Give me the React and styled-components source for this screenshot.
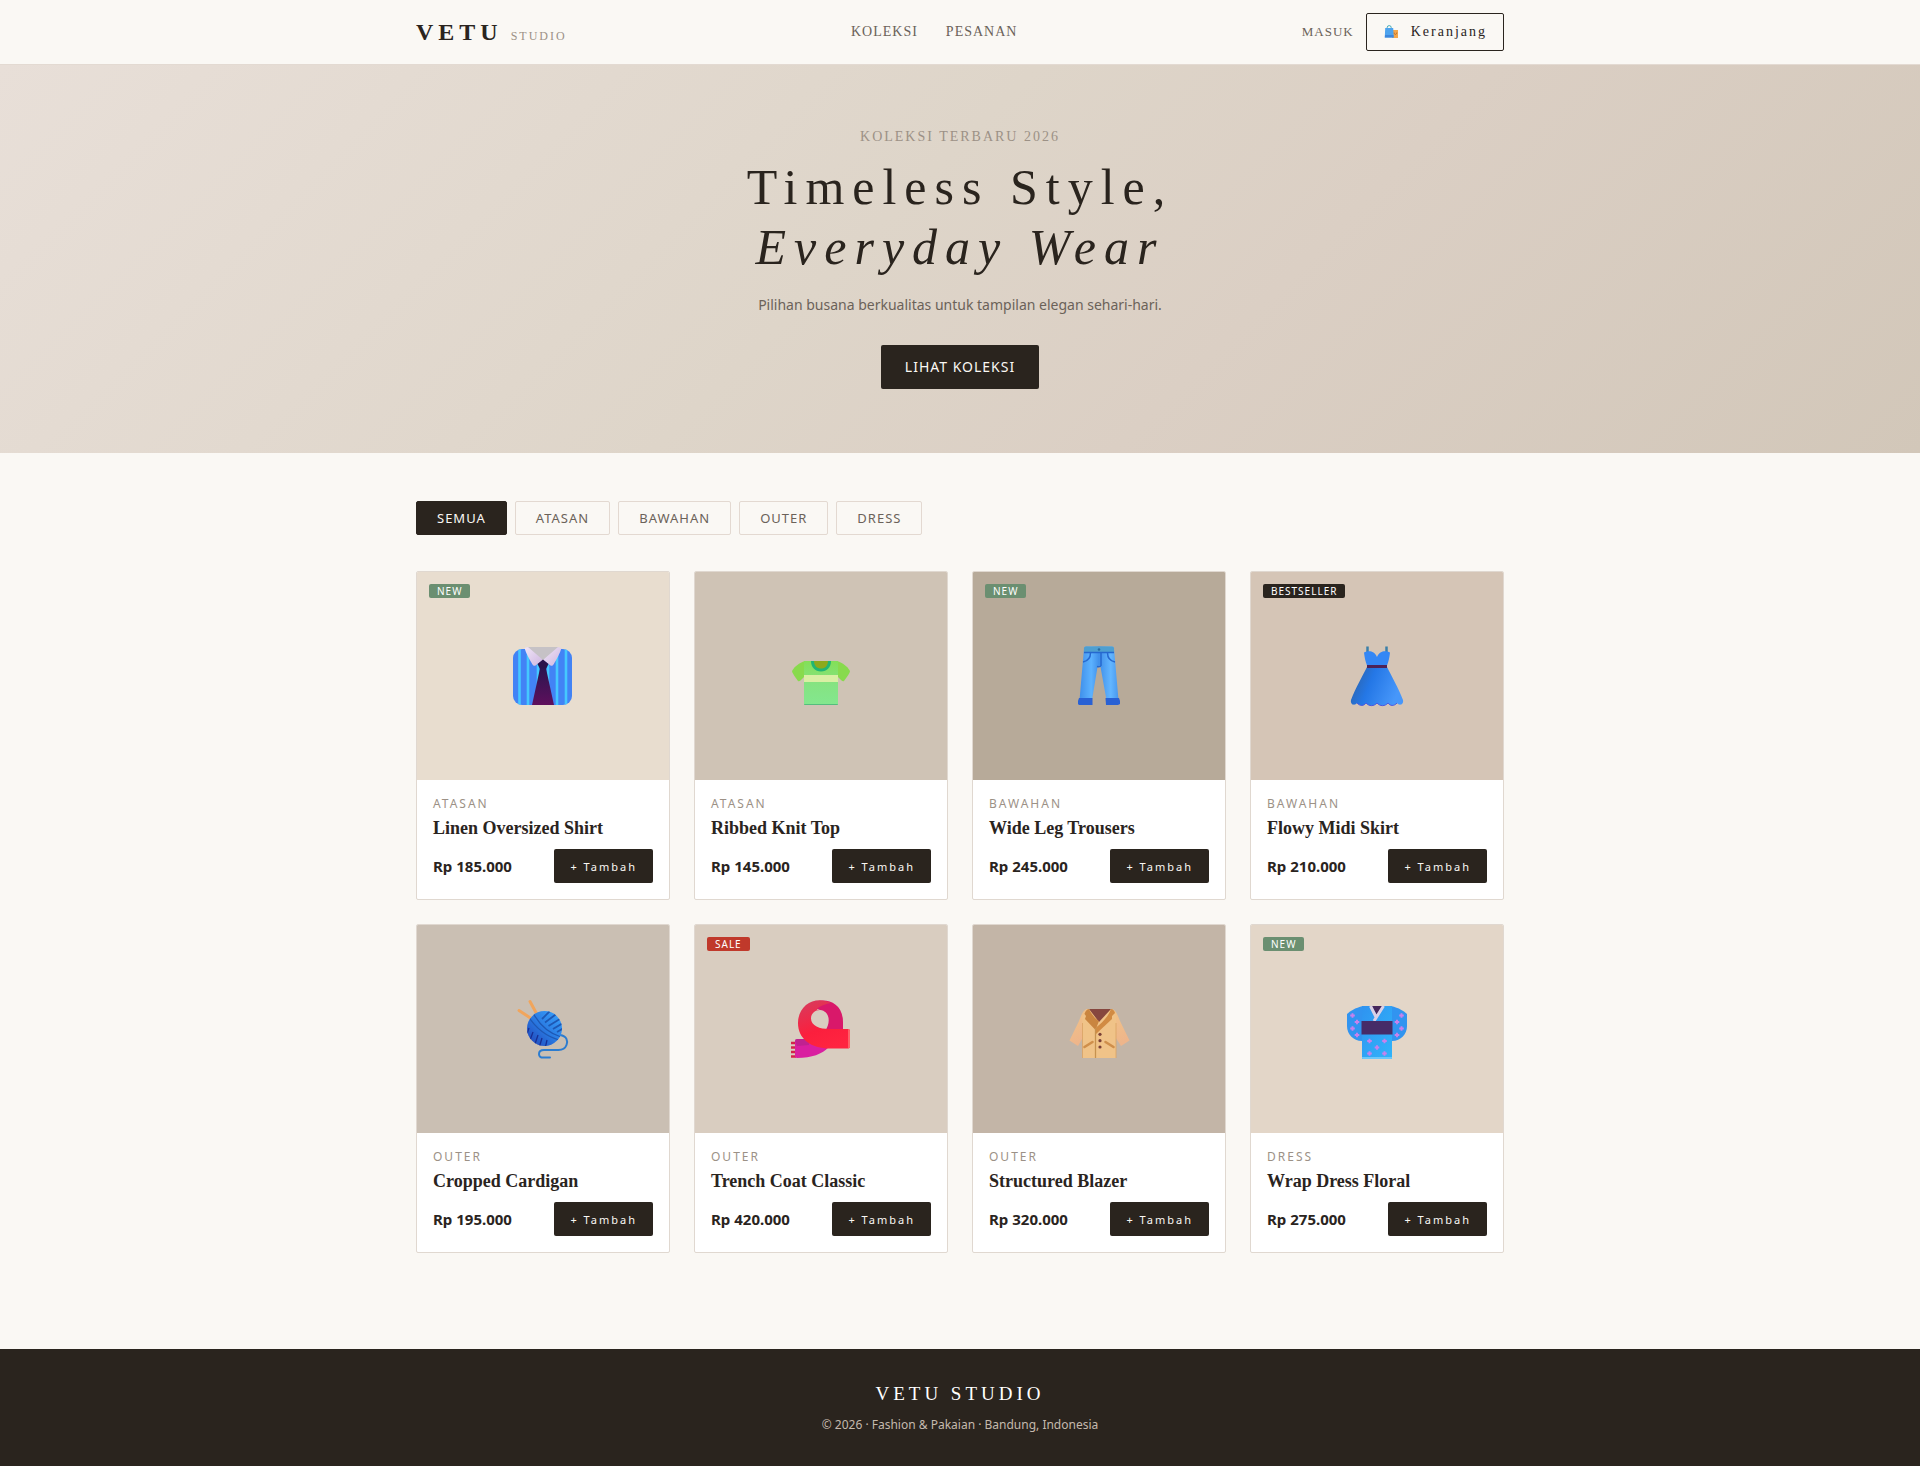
import { useState } from "react";
import styled, { createGlobalStyle } from "styled-components";

const serif = `"Liberation Serif", serif`;
const sans = `"Noto Sans", sans-serif`;

const GlobalStyle = createGlobalStyle`
  * {
    box-sizing: border-box;
    margin: 0;
    padding: 0;
  }
  body {
    background: #faf8f4;
    color: #2a241e;
    font-family: ${sans};
  }
  button {
    font: inherit;
    cursor: pointer;
  }
  a {
    color: inherit;
    text-decoration: none;
  }
`;

//Layout
const Page = styled.div`
  display: flex;
  flex-direction: column;
  min-height: 100vh;
`;

const Container = styled.div`
  width: 100%;
  max-width: 1136px;
  margin: 0 auto;
  padding: 0 24px;
`;

//Header
const Header = styled.header`
  border-bottom: 1px solid #e3dad2;
  font-family: ${serif};
`;

const HeaderRow = styled(Container)`
  display: flex;
  justify-content: space-between;
  align-items: center;
  height: 64px;
`;

const Logo = styled.a`
  display: flex;
  align-items: baseline;
  gap: 8px;
  font-size: 24px;
  font-weight: 700;
  letter-spacing: 5px;

  small {
    font-size: 12px;
    font-weight: 400;
    letter-spacing: 2px;
    color: #9c9186;
  }
`;

const Nav = styled.nav`
  display: flex;
  gap: 28px;
`;

const NavLink = styled.a`
  font-size: 14px;
  letter-spacing: 1px;
  text-transform: uppercase;
  color: #6b6259;
`;

const Account = styled.div`
  display: flex;
  align-items: center;
  gap: 12px;
`;

const LoginLink = styled(NavLink)`
  font-size: 13px;
`;

const CartButton = styled.button`
  display: flex;
  align-items: center;
  gap: 10px;
  height: 38px;
  padding: 0 16px;
  border: 1px solid #2a241e;
  border-radius: 2px;
  background: transparent;
  color: #2a241e;
  font-size: 14px;
  letter-spacing: 2px;
`;

//Hero
const Hero = styled.section`
  display: flex;
  flex-direction: column;
  align-items: center;
  padding: 64px 24px;
  text-align: center;
  background: linear-gradient(
    135deg,
    #e8dfd8 0%,
    #ded5c9 45%,
    #dbcfc4 65%,
    #d2c7b9 100%
  );
`;

const Eyebrow = styled.p`
  margin-bottom: 12px;
  font-family: ${serif};
  font-size: 14px;
  line-height: 16px;
  letter-spacing: 2px;
  text-transform: uppercase;
  color: #9c9186;
`;

const HeroTitle = styled.h1`
  margin-bottom: 16px;
  font-family: ${serif};
  font-size: 50px;
  font-weight: 400;
  line-height: 60px;
  letter-spacing: 8px;
`;

const HeroText = styled.p`
  margin-bottom: 28px;
  font-size: 14px;
  line-height: 24px;
  color: #6b6259;
`;

const HeroButton = styled.a`
  padding: 0 24px;
  border-radius: 2px;
  background: #2a241e;
  color: #faf8f4;
  font-size: 14px;
  line-height: 44px;
  letter-spacing: 1px;
  text-transform: uppercase;
`;

//Catalog
const Main = styled(Container).attrs({ as: "main" })`
  flex: 1;
  padding-top: 48px;
  padding-bottom: 96px;
`;

const Filters = styled.div`
  display: flex;
  flex-wrap: wrap;
  gap: 8px;
  margin-bottom: 36px;
`;

const FilterButton = styled.button`
  height: 34px;
  padding: 0 20px;
  border: 1px solid ${({ $active }) => ($active ? "#2a241e" : "#e3d9d1")};
  border-radius: 2px;
  background: ${({ $active }) => ($active ? "#2a241e" : "transparent")};
  color: ${({ $active }) => ($active ? "#faf8f4" : "#6b6259")};
  font-size: 13px;
  letter-spacing: 1px;
  text-transform: uppercase;
`;

const Grid = styled.div`
  display: grid;
  grid-template-columns: repeat(4, 1fr);
  gap: 24px;

  @media (max-width: 1000px) {
    grid-template-columns: repeat(2, 1fr);
  }
`;

const Card = styled.article`
  overflow: hidden;
  border: 1px solid #e0d8d0;
  border-radius: 2px;
  background: #fff;
`;

const Thumb = styled.div`
  position: relative;
  display: flex;
  justify-content: center;
  align-items: center;
  height: 208px;
  background: ${({ $color }) => $color};
`;

const badgeColors = { New: "#6b8f71", Sale: "#c0392b", Bestseller: "#2a241e" };

const Badge = styled.span`
  position: absolute;
  top: 12px;
  left: 12px;
  padding: 0 8px;
  border-radius: 2px;
  background: ${({ $type }) => badgeColors[$type]};
  color: #fff;
  font-size: 10px;
  line-height: 14px;
  letter-spacing: 1px;
  text-transform: uppercase;
`;

const CardBody = styled.div`
  padding: 16px;
`;

const Category = styled.p`
  margin-bottom: 4px;
  font-size: 12px;
  line-height: 16px;
  letter-spacing: 2px;
  text-transform: uppercase;
  color: #9c9186;
`;

const ProductName = styled.h3`
  margin-bottom: 9px;
  font-family: ${serif};
  font-size: 18px;
  line-height: 24px;
`;

const CardRow = styled.div`
  display: flex;
  justify-content: space-between;
  align-items: center;
`;

const Price = styled.span`
  font-size: 15px;
  font-weight: 700;
`;

const AddButton = styled.button`
  height: 34px;
  padding: 0 16px;
  border: 0;
  border-radius: 2px;
  background: #2a241e;
  color: #faf8f4;
  font-size: 11px;
  letter-spacing: 2px;
`;

//Footer
const Footer = styled.footer`
  padding: 32px 24px;
  text-align: center;
  background: #2a241e;
`;

const FooterTitle = styled.p`
  margin-bottom: 8px;
  font-family: ${serif};
  font-size: 19px;
  line-height: 26px;
  letter-spacing: 4px;
  color: #fff;
`;

const FooterText = styled.p`
  font-size: 12px;
  line-height: 19px;
  color: #c4b9ad;
`;

//Icons
const Icon = ({ children }) => (
  <svg width="64" height="64" viewBox="0 0 64 64" aria-hidden="true">
    {children}
  </svg>
);

const BagsIcon = () => (
  <svg width="18" height="14" viewBox="-1 0 18 14" aria-hidden="true">
    <path d="M8 5h6v8H8z" fill="#f3a64a" />
    <path d="M10 7.500c0 2.500 2.800 2.500 2.800 0" fill="none" stroke="#a8602a" strokeWidth="0.800" />
    <path d="M3.200 4V2.600a2 2 0 0 1 4 0V4" fill="none" stroke="#3fa9b8" strokeWidth="1" />
    <path d="M1.200 3h8l.5 9.500H.8z" fill="#4da3ee" />
    <path d="M1 10h8.600l.1 2.500H.8z" fill="#3d86dc" />
  </svg>
);

const ShirtIcon = () => (
  <Icon>
    <defs>
      <linearGradient id="tie" x1="0" y1="0" x2="0" y2="1">
        <stop offset="0" stopColor="#2c1650" />
        <stop offset="1" stopColor="#5e0f5c" />
      </linearGradient>
      <linearGradient id="collar" x1="0" y1="0" x2="1" y2="1">
        <stop offset="0" stopColor="#f1e6f7" />
        <stop offset="1" stopColor="#cdb5e0" />
      </linearGradient>
      <clipPath id="shirtBody">
        <rect x="2" y="5" width="59" height="56" rx="9" />
      </clipPath>
    </defs>
    <g clipPath="url(#shirtBody)">
      <rect x="2" y="5" width="59" height="56" fill="#4283f5" />
      <path
        d="M8.500 5v56M17 5v56M27 20v41M37 20v41M46 5v56M55 5v56"
        stroke="#45c8ff"
        strokeWidth="2.600"
      />
    </g>
    <path d="M16 3h32L32 18z" fill="#c6c2c6" />
    <path d="M13.500 4 17 3l15 13-7.500 5.500q-2 1-3-1C18 15 15 9 13.500 4z" fill="url(#collar)" />
    <path d="M50.500 4 47 3 32 16l7.500 5.500q2 1 3-1C46 15 49 9 50.500 4z" fill="url(#collar)" />
    <path d="M32 15.500 37.500 20 35 25h-6l-2.500-5z" fill="#2a134a" />
    <path d="M29 24.500h6L43 61H21z" fill="url(#tie)" />
  </Icon>
);

const TeeIcon = () => (
  <Icon>
    <defs>
      <linearGradient id="tee" x1="0" y1="0" x2="0" y2="1">
        <stop offset="0" stopColor="#83df57" />
        <stop offset="0.500" stopColor="#85e381" />
        <stop offset="1" stopColor="#83e78f" />
      </linearGradient>
    </defs>
    <path d="M16 17C10 19 6 22 3 27q0 2 6 10 1 1 3-1l5-5z" fill="#88da4d" />
    <path d="M48 17c6 2 10 5 13 10q0 2-6 10-1 1-3-1l-5-5z" fill="#88da4d" />
    <path d="M15 17h34v43q0 1-1 1H16q-1 0-1-1z" fill="url(#tee)" />
    <path d="M15 31h34v7H15z" fill="#d9efa4" />
    <path d="M15 60h34q0 1-1 1H16q-1 0-1-1z" fill="#55bd7d" />
    <path d="M22 17h20c0 6-4 10.500-10 10.500S22 23 22 17z" fill="#20b573" />
    <path d="M25 17h14c0 5-3 7.500-7 7.500S25 22 25 17z" fill="#8ca91c" />
  </Icon>
);

const TrousersIcon = () => (
  <Icon>
    <defs>
      <linearGradient id="jeans" x1="0" y1="0" x2="1" y2="0">
        <stop offset="0" stopColor="#3f8fea" />
        <stop offset="0.300" stopColor="#5cb2ff" />
        <stop offset="0.500" stopColor="#3f8fea" />
        <stop offset="0.800" stopColor="#63b6ff" />
        <stop offset="1" stopColor="#4797ee" />
      </linearGradient>
    </defs>
    <path
      d="M19 2.500h26q2 0 2 2L51.500 56H39.500L33.500 23h-3L25 56H12.500L17 4.500q0-2 2-2z"
      fill="url(#jeans)"
    />
    <path d="M19 2.500h26q2 0 2 2V8H17V4.500q0-2 2-2z" fill="#4e9fd0" />
    <path
      d="M17 8.500h30M34 8.500v13q-1 2-4 1M23.500 9c0 5-3 8-7.500 9M40.500 9c0 5 3 8 7.500 9"
      fill="none"
      stroke="#2668cf"
      strokeWidth="1.500"
    />
    <circle cx="32" cy="5.500" r="1.300" fill="#2a6a9d" />
    <path d="M12 54h13.500v7H12q-1.500-1-1-4z" fill="#2961d4" />
    <path d="M38.500 54H52q1.500 3 1 6l-2 1H39z" fill="#2961d4" />
  </Icon>
);

const DressIcon = () => (
  <Icon>
    <defs>
      <linearGradient id="skirt" x1="0" y1="0" x2="1" y2="0.300">
        <stop offset="0" stopColor="#2f5f9c" />
        <stop offset="0.450" stopColor="#2477e6" />
        <stop offset="1" stopColor="#4797fa" />
      </linearGradient>
    </defs>
    <path d="M22.500 2.500V10M41.500 2.500V10" stroke="#3b7fa8" strokeWidth="2.500" />
    <path
      d="M19 8.500c4-2 10-2.500 13 4.500 3-7 9-6.500 13-4.500-.5 5-1.500 9-3 13H22c-1.500-4-2.500-8-3-13z"
      fill="#3487f5"
    />
    <path
      d="M22 23h20c5 10 11 20 16 33 1 5-4 6-6 3-3 3.500-7 3-9 0-3 3.500-8 3.500-11 0-3 3.500-8 3.500-11 0-2 3-6 3.500-9 0-2 3-7 2-6-3 5-13 11-23 16-33z"
      fill="url(#skirt)"
    />
    <path
      d="M12 59c3 3.500 7 3 9 0 3 3.500 8 3.500 11 0 3 3.500 8 3.500 11 0 2 3 6 3.500 9 0"
      fill="none"
      stroke="#4d58de"
      strokeWidth="1"
    />
    <path d="M22 21h20v3H22z" fill="#4d2257" />
  </Icon>
);

const YarnIcon = () => (
  <Icon>
    <defs>
      <linearGradient id="yarn" x1="1" y1="0" x2="0" y2="1">
        <stop offset="0" stopColor="#3ba6ff" />
        <stop offset="0.500" stopColor="#2a7be2" />
        <stop offset="1" stopColor="#2040b6" />
      </linearGradient>
      <clipPath id="ball">
        <circle cx="33.500" cy="31.500" r="17.500" />
      </clipPath>
    </defs>
    <path
      d="M8 13.500 24 24M19 4.500 29 23"
      stroke="#f1a55c"
      strokeWidth="3"
      strokeLinecap="round"
    />
    <path
      d="M49 38c7 1 8 6 6.500 10-1.500 4-4 5-8 5H33q-5 0-5 4t5 3.500h6"
      fill="none"
      stroke="#2c7cd0"
      strokeWidth="2"
      strokeLinecap="round"
    />
    <circle cx="33.500" cy="31.500" r="17.500" fill="url(#yarn)" />
    <g clipPath="url(#ball)" fill="none" stroke="#1e58b4" strokeWidth="1.300">
      <path d="M17 19c7 11 17 20 31 24M22 16c6 11 15 20 28 24" />
      <path d="m31 22 9-9M34 25.500l12-9M37.500 29l13-8M42 32l10-6M46 35l7-4" strokeWidth="1.800" />
      <path d="m18 31-3 9M22 35l-4 11M27 38l-4 12M31 41l-3 10M36 43l-2 9" stroke="#182e92" />
    </g>
  </Icon>
);

const ScarfIcon = () => (
  <Icon>
    <defs>
      <linearGradient id="scarf" x1="0.200" y1="0" x2="0.600" y2="1">
        <stop offset="0" stopColor="#d93a5c" />
        <stop offset="0.600" stopColor="#fb1f3d" />
        <stop offset="1" stopColor="#ff2440" />
      </linearGradient>
    </defs>
    <path d="M2 46h5M2 50.500h5M2 55h5M2 59.500h5" stroke="#d3234a" strokeWidth="2.400" />
    <path d="M6 44q0-2 2-2h18l14 8c-7 7-17 11-32 11q-2 0-2-2z" fill="#d91fa0" />
    <path d="M6 44q0-2 2-2h12v6L8 49z" fill="#a8247f" opacity=".5" />
    <path
      d="M20 9C30-1 54 2 54 25v9H36c6-8 5-20-5-21z"
      fill="#d9186a"
    />
    <path
      d="M42 6C26-2 9 8 9 26c0 16 13 25.500 32 25.500h18q2 0 2-2V34q0-2-2-2H40c-9 0-18-3-18-10.500 0-5 4-8.500 9-8.500C24 14 30 8 42 6z"
      fill="url(#scarf)"
    />
    <path d="M59 32q2 0 2 2v15.500q0 2-2 2z" fill="#ff6067" />
  </Icon>
);

const BlazerIcon = () => (
  <Icon>
    <defs>
      <linearGradient id="sleeve" x1="0" y1="0" x2="0.300" y2="1">
        <stop offset="0" stopColor="#f2c486" />
        <stop offset="1" stopColor="#eeb58b" />
      </linearGradient>
    </defs>
    <path d="M20 12c-4 1-6 7-8 12L2.500 43.500 11 49l8-14z" fill="url(#sleeve)" />
    <path d="M45 12c4 1 6 7 8 12l9.500 19.500L54 49l-9-14z" fill="url(#sleeve)" />
    <path d="M20 12h25l4 8v41H15.500V20z" fill="#f0c388" />
    <path d="M15.500 26v35M49 26v35" stroke="#d9a263" strokeWidth=".8" />
    <path d="M22 12h22L32 25z" fill="#86473f" />
    <path d="M22 12c-2 0-4 3-4.500 5l1.500 2-1 3 10.500 11 3.500-9c-5-3-8-8-10-12z" fill="#c98540" />
    <path d="M44 12c2 0 3.500 2 4 4l-3 3v3L29 37l-.5-6C35 26 41 20 44 12z" fill="#d18b43" />
    <path d="M28.500 31v30" stroke="#c6924f" strokeWidth="1.300" />
    <path
      d="m17.500 50 8-5M38.500 45l8 5"
      stroke="#cf8f4b"
      strokeWidth="2.600"
      strokeLinecap="round"
    />
    <circle cx="33" cy="37.300" r="1.600" fill="#7a4036" />
    <circle cx="33" cy="43.700" r="1.600" fill="#7a4036" />
    <circle cx="33" cy="50" r="1.600" fill="#7a4036" />
  </Icon>
);

const flowers = [
  [7.5, 18.5],
  [12, 25],
  [7.5, 31.5],
  [12, 38],
  [56.5, 18.5],
  [52, 25],
  [56.5, 31.5],
  [52, 38],
  [24.5, 44],
  [39.5, 44],
  [32, 50.5],
  [24.5, 56.5],
  [39.5, 56.5],
];

const KimonoIcon = () => (
  <Icon>
    <defs>
      <linearGradient id="kimono" x1="0" y1="0" x2="1" y2="1">
        <stop offset="0" stopColor="#2f93f0" />
        <stop offset="1" stopColor="#30b4fa" />
      </linearGradient>
    </defs>
    <path d="M18 9C10 11 5 14 2 17v12c0 8 6 15 15 15z" fill="#3194f0" />
    <path d="M46 9c8 2 13 5 16 8v12c0 8-6 15-15 15z" fill="#3194f0" />
    <path d="M17 9h30v52q0 1-1 1H18q-1 0-1-1z" fill="url(#kimono)" />
    <path d="M17 60h30v1q0 1-1 1H18q-1 0-1-1z" fill="#6bc8fa" />
    <path d="M26 9h12l-6 9z" fill="#45275c" />
    <path d="m25.500 9 6 12M38.500 9 29 24" stroke="#d9d0e6" strokeWidth="3" />
    <path d="M16.500 24h31v13.500h-31z" fill="#462c68" />
    {flowers.map(([x, y]) => (
      <path
        key={`${x}-${y}`}
        d={`M${x - 2.3} ${y}h4.600M${x} ${y - 2.3}v4.600`}
        stroke="#c881ec"
        strokeWidth="1.900"
      />
    ))}
  </Icon>
);

const categories = ["Semua", "Atasan", "Bawahan", "Outer", "Dress"];

const products = [
  { id: 1, name: "Linen Oversized Shirt", category: "Atasan", price: 185000, color: "#e8ddcf", icon: ShirtIcon, badge: "New" },
  { id: 2, name: "Ribbed Knit Top", category: "Atasan", price: 145000, color: "#cfc3b5", icon: TeeIcon },
  { id: 3, name: "Wide Leg Trousers", category: "Bawahan", price: 245000, color: "#b7aa99", icon: TrousersIcon, badge: "New" },
  { id: 4, name: "Flowy Midi Skirt", category: "Bawahan", price: 210000, color: "#d5c5b6", icon: DressIcon, badge: "Bestseller" },
  { id: 5, name: "Cropped Cardigan", category: "Outer", price: 195000, color: "#cabfb3", icon: YarnIcon },
  { id: 6, name: "Trench Coat Classic", category: "Outer", price: 420000, color: "#d9cdc0", icon: ScarfIcon, badge: "Sale" },
  { id: 7, name: "Structured Blazer", category: "Outer", price: 320000, color: "#c3b5a7", icon: BlazerIcon },
  { id: 8, name: "Wrap Dress Floral", category: "Dress", price: 275000, color: "#e3d6c8", icon: KimonoIcon, badge: "New" },
];

function formatPrice(price) {
  return `Rp ${String(price).replace(/\B(?=(\d{3})+$)/g, ".")}`;
}

//ProductCard
const ProductCard = ({ product }) => {
  const ProductIcon = product.icon;

  return (
    <Card>
      <Thumb $color={product.color}>
        {product.badge && <Badge $type={product.badge}>{product.badge}</Badge>}
        <ProductIcon />
      </Thumb>
      <CardBody>
        <Category>{product.category}</Category>
        <ProductName>{product.name}</ProductName>
        <CardRow>
          <Price>{formatPrice(product.price)}</Price>
          <AddButton type="button">+ Tambah</AddButton>
        </CardRow>
      </CardBody>
    </Card>
  );
};

const App = () => {
  const [active, setActive] = useState("Semua");

  const visible = products.filter(
    (product) => active === "Semua" || product.category === active
  );

  return (
    <Page>
      <GlobalStyle />
      <Header>
        <HeaderRow>
          <Logo href="#">
            VETU <small>STUDIO</small>
          </Logo>
          <Nav>
            <NavLink href="#koleksi">Koleksi</NavLink>
            <NavLink href="#pesanan">Pesanan</NavLink>
          </Nav>
          <Account>
            <LoginLink href="#masuk">Masuk</LoginLink>
            <CartButton type="button">
              <BagsIcon />
              Keranjang
            </CartButton>
          </Account>
        </HeaderRow>
      </Header>
      <Hero>
        <Eyebrow>Koleksi Terbaru 2026</Eyebrow>
        <HeroTitle>
          Timeless Style,
          <br />
          <em>Everyday Wear</em>
        </HeroTitle>
        <HeroText>
          Pilihan busana berkualitas untuk tampilan elegan sehari-hari.
        </HeroText>
        <HeroButton href="#koleksi">Lihat Koleksi</HeroButton>
      </Hero>
      <Main id="koleksi">
        <Filters>
          {categories.map((category) => (
            <FilterButton
              key={category}
              type="button"
              $active={category === active}
              onClick={() => setActive(category)}
            >
              {category}
            </FilterButton>
          ))}
        </Filters>
        <Grid>
          {visible.map((product) => (
            <ProductCard key={product.id} product={product} />
          ))}
        </Grid>
      </Main>
      <Footer>
        <FooterTitle>VETU STUDIO</FooterTitle>
        <FooterText>© 2026 · Fashion &amp; Pakaian · Bandung, Indonesia</FooterText>
      </Footer>
    </Page>
  );
};

export default App;
